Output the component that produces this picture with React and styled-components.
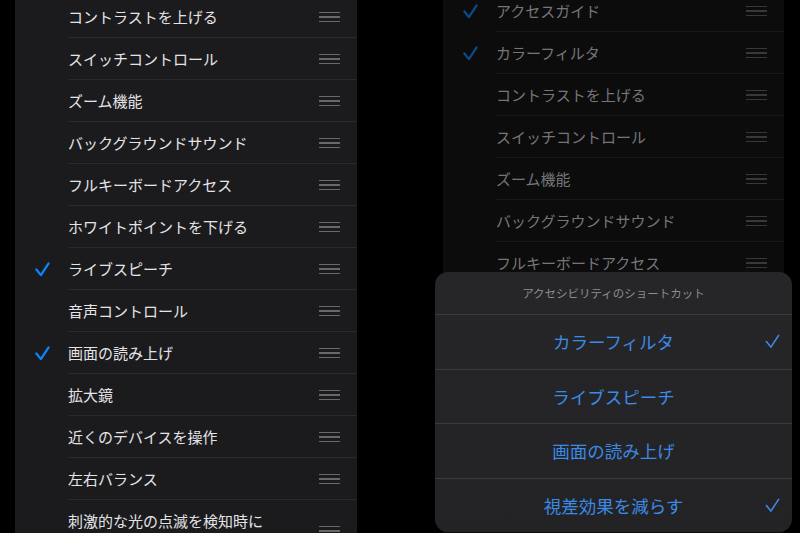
import React from 'react';
import styled, { createGlobalStyle } from 'styled-components';

const Global = createGlobalStyle`
  html, body {
    margin: 0;
    padding: 0;
    background: #000;
  }
  body {
    font-family: "Noto Sans CJK JP", "Noto Sans", "Liberation Sans", sans-serif;
    -webkit-font-smoothing: antialiased;
  }
`;

const Stage = styled.div`
  display: flex;
  width: 800px;
  height: 533px;
  overflow: hidden;
  padding-left: 15px;
  gap: 86px;
  box-sizing: border-box;
`;

const Screen = styled.div`
  position: relative;
  flex: 0 0 ${p => p.$width}px;
  height: 100%;
  background: ${p => (p.$dim ? '#0c0c0d' : '#1b1b1d')};
`;

const Clip = styled.div`
  height: 100%;
  overflow: hidden;
`;

const List = styled.div`
  display: flex;
  flex-direction: column;
  margin-top: ${p => p.$offset}px;
`;

const Row = styled.div`
  display: flex;
  align-items: stretch;
  min-height: 42px;
`;

const CheckCell = styled.div`
  flex: 0 0 53px;
  display: flex;
  align-items: center;
  padding-left: 20px;
  box-sizing: border-box;
  color: ${p => (p.$dim ? '#0a4a8c' : '#0a84ff')};
`;

const Body = styled.div`
  flex: 1;
  display: flex;
  align-items: center;
  justify-content: space-between;
  padding: 11px 17px 10px 0;
  border-bottom: 1px solid ${p => (p.$dim ? '#19191a' : '#2a2a2d')};
  box-sizing: border-box;
`;

const Label = styled.span`
  font-size: 15px;
  line-height: 20px;
  color: ${p => (p.$dim ? '#76767a' : '#e4e4e8')};
  white-space: nowrap;
`;

const Handle = styled.div`
  display: flex;
  flex-direction: column;
  gap: 3px;
  width: 21px;

  span {
    display: block;
    height: 1.5px;
    background: ${p => (p.$dim ? '#38383a' : '#68686c')};
  }
`;

const Sheet = styled.div`
  position: absolute;
  left: -8px;
  right: -8px;
  bottom: 1px;
  background: linear-gradient(180deg, #262628 0%, #232325 100%);
  border-radius: 13px;
  overflow: hidden;
`;

const SheetTitle = styled.div`
  height: 42px;
  display: flex;
  align-items: center;
  justify-content: center;
  font-size: 11.5px;
  color: #8c8c91;
`;

const SheetItem = styled.div`
  height: 54.5px;
  display: grid;
  grid-template-columns: 1fr auto 1fr;
  align-items: center;
  border-top: 1px solid #3b3b3e;
  box-sizing: border-box;
  color: #3b8ae6;
  font-size: 17.5px;
`;

const SheetCheck = styled.div`
  justify-self: end;
  padding-right: 12px;
  display: flex;
`;

const Check = ({ size = 15, weight = 2.4 }) => (
  <svg width={size} height={size} viewBox="0 0 16 16" fill="none">
    <polyline
      points="1.5,8 6.3,14 14.5,1.5"
      stroke="currentColor"
      strokeWidth={weight}
      strokeLinecap="round"
      strokeLinejoin="round"
    />
  </svg>
);

const DragHandle = ({ dim }) => (
  <Handle $dim={dim}>
    <span />
    <span />
    <span />
  </Handle>
);

const leftItems = [
  { label: 'コントラストを上げる' },
  { label: 'スイッチコントロール' },
  { label: 'ズーム機能' },
  { label: 'バックグラウンドサウンド' },
  { label: 'フルキーボードアクセス' },
  { label: 'ホワイトポイントを下げる' },
  { label: 'ライブスピーチ', checked: true },
  { label: '音声コントロール' },
  { label: '画面の読み上げ', checked: true },
  { label: '拡大鏡' },
  { label: '近くのデバイスを操作' },
  { label: '左右バランス' },
  { label: ['刺激的な光の点滅を検知時に', '暗くする'] },
];

// rows below the sheet are hidden by it, so the list stops here
const rightItems = [
  { label: 'アクセスガイド', checked: true },
  { label: 'カラーフィルタ', checked: true },
  { label: 'コントラストを上げる' },
  { label: 'スイッチコントロール' },
  { label: 'ズーム機能' },
  { label: 'バックグラウンドサウンド' },
  { label: 'フルキーボードアクセス' },
];

const shortcuts = [
  { label: 'カラーフィルタ', checked: true },
  { label: 'ライブスピーチ' },
  { label: '画面の読み上げ' },
  { label: '視差効果を減らす', checked: true },
];

const ShortcutList = ({ items, dim, offset }) => (
  <List $offset={offset}>
    {items.map((item, i) => (
      <Row key={i}>
        <CheckCell $dim={dim}>{item.checked && <Check />}</CheckCell>
        <Body $dim={dim}>
          <Label $dim={dim}>
            {Array.isArray(item.label)
              ? item.label.map((l, j) => <div key={j}>{l}</div>)
              : item.label}
          </Label>
          <DragHandle dim={dim} />
        </Body>
      </Row>
    ))}
  </List>
);

export default function App() {
  return (
    <>
      <Global />
      <Stage>
        <Screen $width={342}>
          <Clip>
            <ShortcutList items={leftItems} offset={-4} />
          </Clip>
        </Screen>
        <Screen $width={341} $dim>
          <Clip>
            <ShortcutList items={rightItems} dim offset={-10} />
          </Clip>
          <Sheet>
            <SheetTitle>アクセシビリティのショートカット</SheetTitle>
            {shortcuts.map((s, i) => (
              <SheetItem key={i}>
                <span />
                <span>{s.label}</span>
                <SheetCheck>{s.checked && <Check size={15} weight={1.7} />}</SheetCheck>
              </SheetItem>
            ))}
          </Sheet>
        </Screen>
      </Stage>
    </>
  );
}
